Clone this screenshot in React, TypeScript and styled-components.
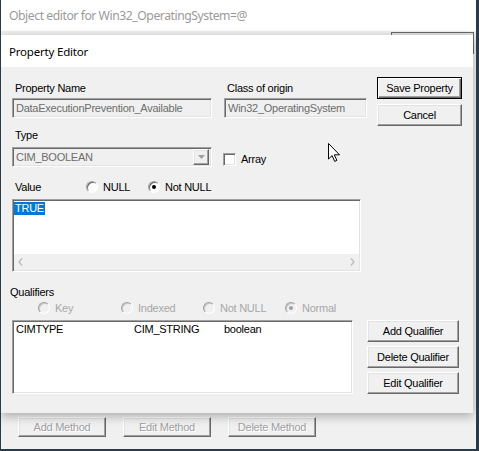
import styled, { createGlobalStyle, css } from "styled-components";

const GlobalStyle = createGlobalStyle`
  html, body { margin: 0; padding: 0; background: #f0f0f0; }
  * { box-sizing: border-box; }
`;

const ui = `"Liberation Sans", Arial, sans-serif`;
const title = `"Noto Sans", "Open Sans", sans-serif`;

const sunken = css`
  border: 1px solid;
  border-color: #a0a0a0 #ffffff #ffffff #a0a0a0;
  box-shadow: inset 1px 1px 0 #696969, inset -1px -1px 0 #e3e3e3;
`;

const raised = css`
  border: 1px solid;
  border-color: #ffffff #696969 #696969 #ffffff;
  box-shadow: inset -1px -1px 0 #a0a0a0, inset 1px 1px 0 #e3e3e3;
`;

const Frame = styled.div`
  position: relative;
  width: 479px;
  height: 451px;
  overflow: hidden;
  display: flex;
  flex-direction: column;
  background: #f0f0f0;
  border-left: 1px solid #2b3a4a;
  border-right: 3px solid #2b3a4a;
  border-bottom: 2px solid #2b3a4a;
  font-family: ${ui};
  font-size: 11px;
  letter-spacing: -0.25px;
  color: #000;
`;

const OuterTitle = styled.div`
  height: 31px;
  flex: none;
  display: flex;
  align-items: center;
  padding-left: 8px;
  background: #fff;
  font-family: ${title};
  font-size: 12.2px;
  letter-spacing: -0.45px;
  color: #9a9a9a;
`;

const OuterBody = styled.div`
  flex: 1;
  display: flex;
  flex-direction: column;
  justify-content: space-between;
  padding: 1px 2px 12px 17px;
`;

const PeekRow = styled.div`
  display: flex;
  justify-content: flex-end;
`;

const PeekButton = styled.div`
  width: 83px;
  height: 22px;
  border: 1px solid #696969;
  background: #e1e1e1;
`;

const MethodBar = styled.div`
  display: flex;
  gap: 17px;
`;

const Button = styled.div<{ $w?: number; $h?: number; $default?: boolean; $disabled?: boolean }>`
  width: ${({ $w }) => $w ?? 84}px;
  height: ${({ $h }) => $h ?? 22}px;
  display: flex;
  align-items: center;
  justify-content: center;
  background: #f0f0f0;
  white-space: nowrap;
  ${raised};
  ${({ $default }) =>
    $default &&
    css`
      border-color: #000;
      box-shadow: inset 1px 1px 0 #ffffff, inset -1px -1px 0 #696969, inset -2px -2px 0 #a0a0a0;
    `}
  ${({ $disabled }) =>
    $disabled &&
    css`
      color: #a0a0a0;
      text-shadow: 1px 1px 0 #ffffff;
    `}
`;

const Dialog = styled.div`
  position: absolute;
  left: 0;
  top: 35px;
  width: 472px;
  height: 378px;
  display: flex;
  flex-direction: column;
  background: #f0f0f0;
  box-shadow: 0 3px 10px rgba(0, 0, 0, 0.3);
`;

const DialogTitle = styled.div`
  height: 32px;
  flex: none;
  display: flex;
  align-items: center;
  padding-left: 8px;
  background: #fff;
  font-family: ${title};
  font-size: 11.5px;
  letter-spacing: -0.2px;
`;

const DialogBody = styled.div`
  display: flex;
  flex-direction: column;
  padding-left: 11px;
`;

const Upper = styled.div`
  display: flex;
  align-items: flex-start;
`;

const Main = styled.div`
  width: 355px;
  display: flex;
  flex-direction: column;
`;

const FieldsRow = styled.div`
  display: flex;
  gap: 12px;
  margin-top: 15px;
`;

const Field = styled.div<{ $w: number }>`
  width: ${({ $w }) => $w}px;
  display: flex;
  flex-direction: column;
  gap: 3px;
`;

const Label = styled.div<{ $mt?: number }>`
  line-height: 13px;
  height: 13px;
  padding-left: 3px;
  margin-top: ${({ $mt }) => $mt ?? 0}px;
  white-space: nowrap;
`;

const TextBox = styled.div`
  height: 20px;
  display: flex;
  align-items: center;
  padding-left: 3px;
  background: #f0f0f0;
  color: #6d6d6d;
  white-space: nowrap;
  overflow: hidden;
  ${sunken};
`;

const SideButtons = styled.div`
  margin: 10px 0 0 10px;
  display: flex;
  flex-direction: column;
  gap: 5px;
`;

const TypeRow = styled.div`
  display: flex;
  align-items: center;
  margin-top: 5px;
`;

const Combo = styled.div`
  width: 200px;
  height: 20px;
  display: flex;
  align-items: center;
  justify-content: space-between;
  padding: 0 2px 0 3px;
  background: #f0f0f0;
  color: #6d6d6d;
  ${sunken};
`;

const ComboArrow = styled.div`
  width: 16px;
  height: 16px;
  display: grid;
  place-items: center;
  ${raised};
`;

const Check = styled.div`
  width: 13px;
  height: 13px;
  margin: 4px 0 0 11px;
  background: #fff;
  ${sunken};
`;

const CheckText = styled.span`
  margin: 4px 0 0 5px;
`;

const ValueRow = styled.div`
  display: flex;
  align-items: center;
  height: 14px;
  margin-top: 13px;
`;

const ValueLabel = styled.div`
  width: 74px;
  padding-left: 3px;
`;

const RadioOption = styled.div<{ $w: number; $disabled?: boolean }>`
  width: ${({ $w }) => $w}px;
  display: flex;
  align-items: center;
  gap: 5px;
  white-space: nowrap;
  color: ${({ $disabled }) => ($disabled ? "#a7a7a7" : "#000")};
`;

const RadioDot = styled.span<{ $checked?: boolean; $disabled?: boolean }>`
  position: relative;
  width: 12px;
  height: 12px;
  flex: none;
  border-radius: 50%;
  border: 1px solid;
  border-color: #a0a0a0 #ffffff #ffffff #a0a0a0;
  box-shadow: inset 1px 1px 0 ${({ $disabled }) => ($disabled ? "#c8c8c8" : "#696969")};
  background: ${({ $disabled }) => ($disabled ? "#f0f0f0" : "#fff")};

  &::after {
    content: "";
    display: ${({ $checked }) => ($checked ? "block" : "none")};
    position: absolute;
    left: 3px;
    top: 3px;
    width: 4px;
    height: 4px;
    border-radius: 50%;
    background: ${({ $disabled }) => ($disabled ? "#a0a0a0" : "#000")};
  }
`;

const ValueBox = styled.div`
  width: 349px;
  height: 73px;
  margin-top: 5px;
  display: flex;
  flex-direction: column;
  background: #fff;
  ${sunken};
`;

const ValueText = styled.div`
  flex: 1;
  padding: 2px 0 0 1px;
`;

const Selected = styled.span`
  display: inline-block;
  line-height: 13px;
  padding: 0 1px;
  background: #0078d7;
  color: #fff;
`;

const HScroll = styled.div`
  height: 16px;
  margin: 0 1px 1px 1px;
  display: flex;
  align-items: center;
  justify-content: space-between;
  padding: 0 4px;
  background: #f0f0f0;
`;

const QualLabel = styled.div`
  margin: 14px 0 0 -2px;
  line-height: 13px;
`;

const QualRadios = styled.div`
  display: flex;
  margin: 2px 0 0 26px;
  height: 14px;
`;

const QualRow = styled.div`
  display: flex;
  align-items: flex-start;
  margin-top: 5px;
`;

const QualList = styled.div`
  width: 341px;
  height: 74px;
  padding: 2px 0 0 3px;
  background: #fff;
  ${sunken};
`;

const QualItem = styled.div`
  display: grid;
  grid-template-columns: 118px 90px auto;
  line-height: 13px;
`;

const QualButtons = styled.div`
  margin-left: 14px;
  display: flex;
  flex-direction: column;
  gap: 4px;
`;

const Pointer = styled.svg`
  position: absolute;
  left: 327px;
  top: 143px;
`;

function Chevron({ dir }: { dir: "left" | "right" | "down" }) {
  if (dir === "down") {
    return (
      <svg width="7" height="4" viewBox="0 0 7 4">
        <path d="M0 0h7L3.5 4z" fill="#a0a0a0" />
      </svg>
    );
  }
  return (
    <svg width="5" height="8" viewBox="0 0 5 8">
      <path
        d={dir === "left" ? "M4 0.5L1 4l3 3.5" : "M1 0.5L4 4 1 7.5"}
        fill="none"
        stroke="#b8b8b8"
        strokeWidth="1.2"
      />
    </svg>
  );
}

function Radio({ label, w, checked, disabled }: { label: string; w: number; checked?: boolean; disabled?: boolean }) {
  return (
    <RadioOption $w={w} $disabled={disabled}>
      <RadioDot $checked={checked} $disabled={disabled} />
      {label}
    </RadioOption>
  );
}

export default function App() {
  return (
    <>
      <GlobalStyle />
      <Frame>
        <OuterTitle>Object editor for Win32_OperatingSystem=@</OuterTitle>
        <OuterBody>
          <PeekRow>
            <PeekButton />
          </PeekRow>
          <MethodBar>
            <Button $w={88} $h={20} $disabled>Add Method</Button>
            <Button $w={88} $h={20} $disabled>Edit Method</Button>
            <Button $w={88} $h={20} $disabled>Delete Method</Button>
          </MethodBar>
        </OuterBody>

        <Dialog>
          <DialogTitle>Property Editor</DialogTitle>
          <DialogBody>
            <Upper>
              <Main>
                <FieldsRow>
                  <Field $w={200}>
                    <Label>Property Name</Label>
                    <TextBox>DataExecutionPrevention_Available</TextBox>
                  </Field>
                  <Field $w={143}>
                    <Label>Class of origin</Label>
                    <TextBox>Win32_OperatingSystem</TextBox>
                  </Field>
                </FieldsRow>

                <Label $mt={11}>Type</Label>
                <TypeRow>
                  <Combo>
                    CIM_BOOLEAN
                    <ComboArrow>
                      <Chevron dir="down" />
                    </ComboArrow>
                  </Combo>
                  <Check />
                  <CheckText>Array</CheckText>
                </TypeRow>

                <ValueRow>
                  <ValueLabel>Value</ValueLabel>
                  <Radio label="NULL" w={62} />
                  <Radio label="Not NULL" w={80} checked />
                </ValueRow>
                <ValueBox>
                  <ValueText>
                    <Selected>TRUE</Selected>
                  </ValueText>
                  <HScroll>
                    <Chevron dir="left" />
                    <Chevron dir="right" />
                  </HScroll>
                </ValueBox>
              </Main>
              <SideButtons>
                <Button $w={85} $h={22} $default>Save Property</Button>
                <Button $w={85} $h={22}>Cancel</Button>
              </SideButtons>
            </Upper>

            <QualLabel>Qualifiers</QualLabel>
            <QualRadios>
              <Radio label="Key" w={83} disabled />
              <Radio label="Indexed" w={82} disabled />
              <Radio label="Not NULL" w={82} disabled />
              <Radio label="Normal" w={80} checked disabled />
            </QualRadios>
            <QualRow>
              <QualList>
                <QualItem>
                  <span>CIMTYPE</span>
                  <span>CIM_STRING</span>
                  <span>boolean</span>
                </QualItem>
              </QualList>
              <QualButtons>
                <Button $w={92} $h={22}>Add Qualifier</Button>
                <Button $w={92} $h={22}>Delete Qualifier</Button>
                <Button $w={92} $h={22}>Edit Qualifier</Button>
              </QualButtons>
            </QualRow>
          </DialogBody>
        </Dialog>

        <Pointer width="13" height="19" viewBox="0 0 13 19">
          <path
            d="M0.5 0.5v15.5l3.6-3.4 2.6 5.8 2.2-1-2.6-5.6h5.2z"
            fill="#fff"
            stroke="#000"
            strokeWidth="1"
            strokeLinejoin="miter"
          />
        </Pointer>
      </Frame>
    </>
  );
}
